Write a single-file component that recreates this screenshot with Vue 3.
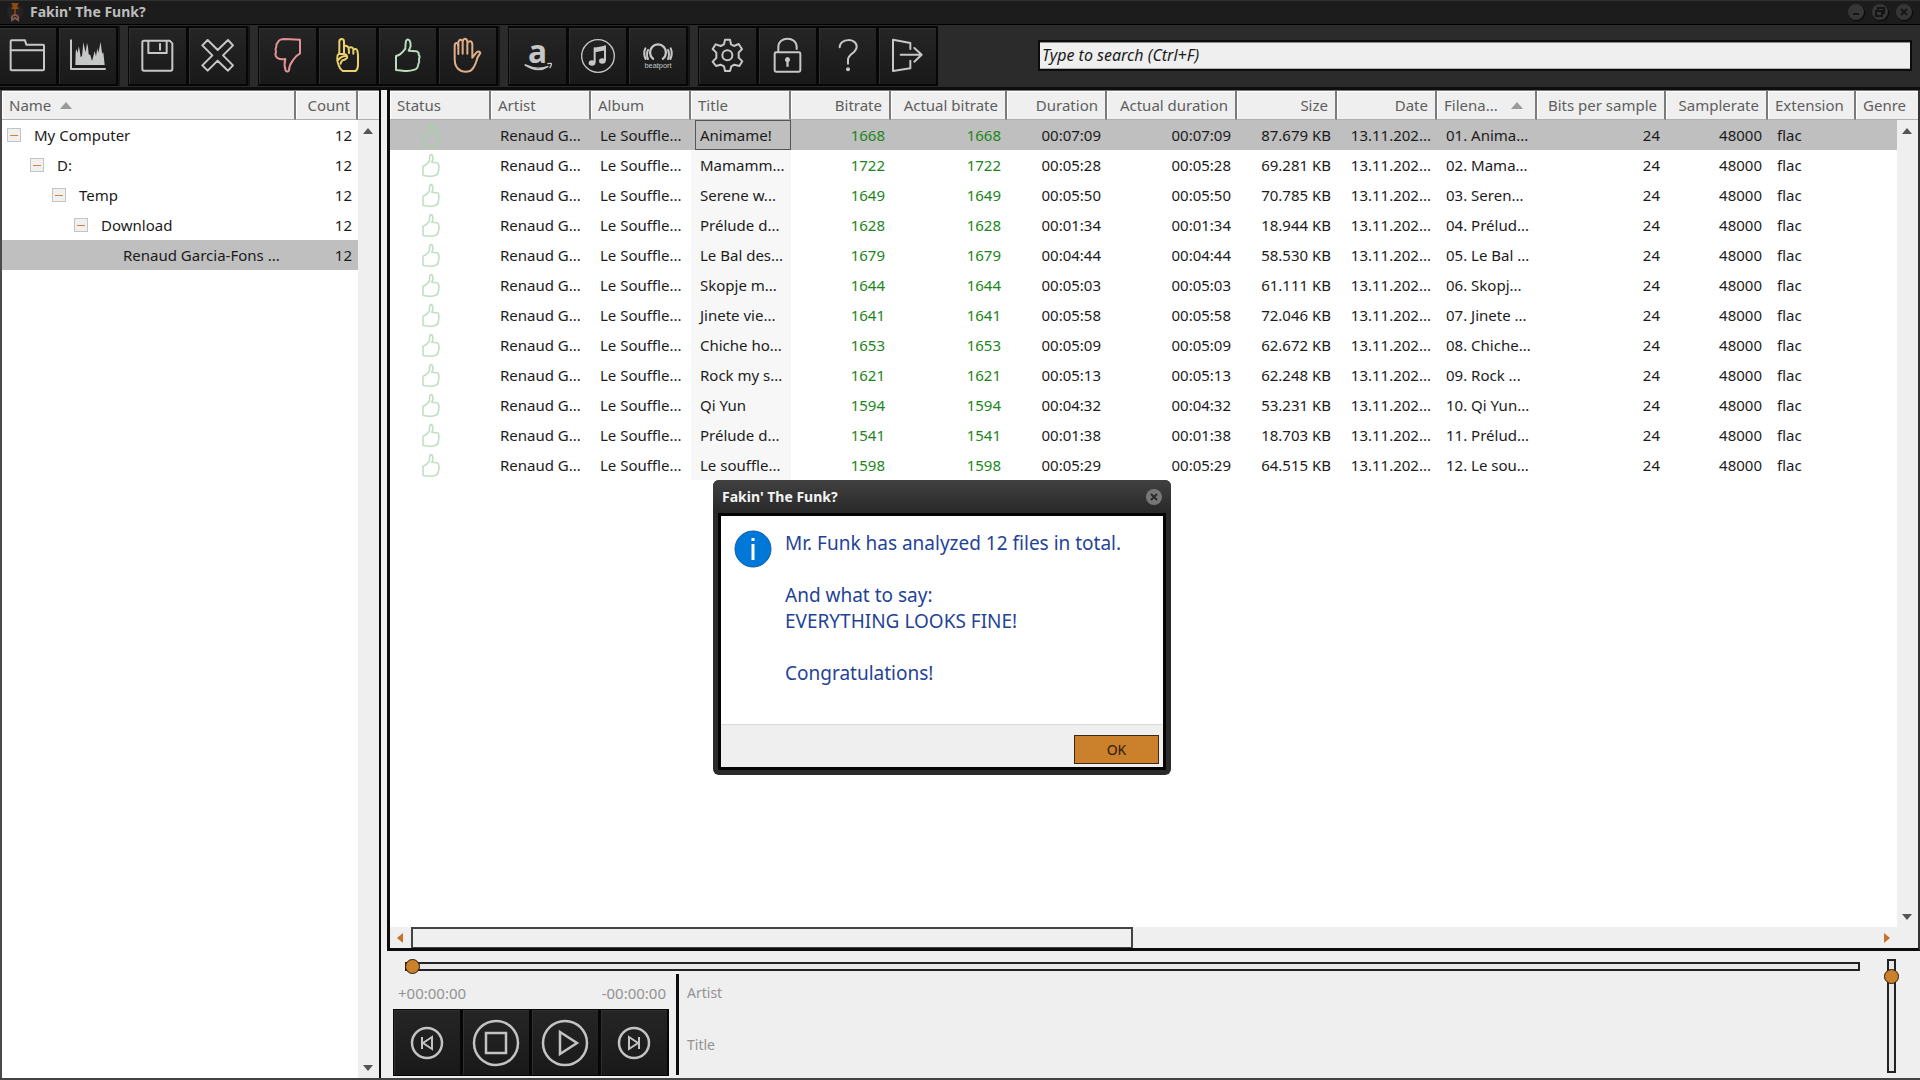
<script setup>
import { ref } from 'vue'

const thumbUp = 'M438 111Q452 109 466 89Q466 76 468 66Q473 57 479 65Q486 80 476 95L498 97Q508 99 506 107Q511 113 507 120Q509 129 505 135Q504 149 494 152Q480 157 465 156L438 153Z'

const groups = [
  [
    { label: 'Open folder', box: '-6 21 180 180', d: ['M32 152V67Q32 64 35 64H75L79 77H129Q132 77 132 80V151Q132 154 129 154H35Q32 154 32 151', 'M32 94H132'] },
    { label: 'Spectrum', box: '174 21 180 180', d: ['M213 64V150H315'], fill: 'M226 138L227 98L230 90L233 103L236 82L239 94L242 114L246 112L250 70L254 88L257 100L261 72L264 84L266 106L271 108L276 126L280 112L284 96L288 112L292 88L295 102L302 68L305 94L307 104L310 100L314 138Z' }
  ],
  [
    { label: 'Save', box: '384 21 180 180', d: ['M432 65H509L517 73V150Q517 155 512 155H432Q427 155 427 150V70Q427 65 432 65Z', 'M445 66V102H500V66', 'M480 75V92'] },
    { label: 'Remove', box: '564 21 180 180', d: ['M607 79L623 63L653 93L684 63L699 79L669 109L699 139L684 155L653 125L623 155L607 139L637 109Z'] }
  ],
  [
    { label: 'Bad', box: '24 21 180 180', color: '#e39096', d: ['M150 62L104 60Q88 60 84 69Q77 76 79 83Q74 91 78 99Q74 108 80 115Q85 123 106 120Q101 137 107 155Q112 161 117 154Q117 140 128 125Q140 108 150 104Z'] },
    { label: 'Suspicious', box: '204 21 180 180', color: '#ecd06a', d: ['M268 105V68Q268 60 275 60Q282 60 282 68V105', 'M282 83Q286 78 293 83Q297 86 297 102M297 87Q303 81 310 89V104M310 92Q318 87 322 95L324 108V138Q324 150 317 156H278Q270 151 266 139Q260 127 262 113Q263 104 270 105H283Q293 107 291 117L284 122Q274 122 272 134M266 122Q274 111 287 111'] },
    { label: 'Good', box: '384 21 180 180', color: '#b9dcbb', d: [thumbUp] },
    { label: 'Stop', box: '564 21 180 180', color: '#deb08a', d: ['M625 105V80Q624 71 619 72Q614 73 614 82V120Q614 148 634 156Q648 160 660 156Q670 151 678 130Q682 113 691 102Q687 94 679 101L667 116V76Q666 67 660 67Q654 67 652 73V104', 'M625 80V70Q627 62 632 62Q637 62 638 68V104M638 68Q640 59 645 59Q651 59 652 68'] }
  ],
  [
    { label: 'Amazon', box: '24 21 180 180', d: [], amazon: true },
    { label: 'iTunes', box: '204 21 180 180', d: [], note: true },
    { label: 'Beatport', box: '384 21 180 180', d: [], beat: true }
  ],
  [
    { label: 'Settings', box: '54 21 180 180', d: ['M135 62H150L153 76L162 81L176 75L186 90L176 101V116L187 127L178 141L163 137L154 142L150 156H135L132 142L122 137L108 141L98 128L109 117V101L98 90L107 76L122 81L132 76Z', 'M157 109A15 15 0 1 1 127 109A15 15 0 1 1 157 109Z'] },
    { label: 'Unlock', box: '234 21 180 180', d: ['M288 100H357Q361 100 361 104V154Q361 158 357 158H288Q284 158 284 154V104Q284 100 288 100Z', 'M295 99V84C295 51 350 51 350 84V90'], fill: 'M322 114A8 8 0 0 1 326 129V143H319V129A8 8 0 0 1 322 114Z' },
    { label: 'Help', box: '414 21 180 180', d: ['M479 85C479 57 530 56 530 83C530 101 504 106 504 122V134'], fill: 'M504 145A6 6 0 1 1 504 157A6 6 0 1 1 504 145Z' },
    { label: 'Exit', box: '594 21 180 180', d: ['M691 90V72L639 62V156L691 148V125', 'M662 107H724M703 87L725 107L703 128'] }
  ]
]

const tree = [
  { name: 'My Computer', level: 0 },
  { name: 'D:', level: 1 },
  { name: 'Temp', level: 2 },
  { name: 'Download', level: 3 },
  { name: 'Renaud Garcia-Fons ...', level: 4, selected: true }
]

const columns = [
  { label: 'Status', cls: 'w101' },
  { label: 'Artist', cls: 'w100' },
  { label: 'Album', cls: 'w100' },
  { label: 'Title', cls: 'w100' },
  { label: 'Bitrate', cls: 'w100', num: true },
  { label: 'Actual bitrate', cls: 'w116', num: true },
  { label: 'Duration', cls: 'w100', num: true },
  { label: 'Actual duration', cls: 'w130', num: true },
  { label: 'Size', cls: 'w100', num: true },
  { label: 'Date', cls: 'w100', num: true },
  { label: 'Filena...', cls: 'w100', sorted: true },
  { label: 'Bits per sample', cls: 'w129', num: true },
  { label: 'Samplerate', cls: 'w102', num: true },
  { label: 'Extension', cls: 'w88' },
  { label: 'Genre', cls: 'rest' }
]

const tracks = [
  ['Animame!', 1668, '00:07:09', '87.679', '01. Anima...'],
  ['Mamamm...', 1722, '00:05:28', '69.281', '02. Mama...'],
  ['Serene w...', 1649, '00:05:50', '70.785', '03. Seren...'],
  ['Prélude d...', 1628, '00:01:34', '18.944', '04. Prélud...'],
  ['Le Bal des...', 1679, '00:04:44', '58.530', '05. Le Bal ...'],
  ['Skopje m...', 1644, '00:05:03', '61.111', '06. Skopj...'],
  ['Jinete vie...', 1641, '00:05:58', '72.046', '07. Jinete ...'],
  ['Chiche ho...', 1653, '00:05:09', '62.672', '08. Chiche...'],
  ['Rock my s...', 1621, '00:05:13', '62.248', '09. Rock ...'],
  ['Qi Yun', 1594, '00:04:32', '53.231', '10. Qi Yun...'],
  ['Prélude d...', 1541, '00:01:38', '18.703', '11. Prélud...'],
  ['Le souffle...', 1598, '00:05:29', '64.515', '12. Le sou...']
].map(([title, bitrate, duration, size, file]) => ({ title, bitrate, duration, size, file }))

const search = ref('')
const position = ref(0)
const volume = ref(92)
const dialogOpen = ref(true)
</script>

<template>
  <div class="app">
    <header class="titlebar">
      <svg class="logo" viewBox="0 0 16 20" aria-hidden="true">
        <circle cx="8" cy="10" r="8" fill="#262423" />
        <path d="M4 1H12L10 4L12 7H4L6 4Z" fill="#8a4c10" />
        <path d="M8 7V13" stroke="#7a3c10" stroke-width="2" />
        <path d="M5 18Q4 13 8 13Q12 13 11 18L8 16Z" fill="none" stroke="#80584c" stroke-width="2" />
      </svg>
      <h1>Fakin' The Funk?</h1>
      <div class="window-buttons">
        <button type="button" aria-label="Minimize"><svg viewBox="0 0 16 16"><path d="M5 10H11" /></svg></button>
        <button type="button" aria-label="Restore"><svg viewBox="0 0 16 16"><path d="M6 6V4H12V9H10M4 7H10V12H4Z" /></svg></button>
        <button type="button" aria-label="Close"><svg viewBox="0 0 16 16"><path d="M5 5L11 11M11 5L5 11" /></svg></button>
      </div>
    </header>

    <div class="toolbar">
      <div v-for="(group, g) in groups" :key="g" class="group">
        <button v-for="tool in group" :key="tool.label" type="button" class="tool" :aria-label="tool.label">
          <svg :viewBox="tool.box" :style="{ color: tool.color }">
            <path v-for="d in tool.d" :key="d" :d="d" class="line" />
            <path v-if="tool.fill" :d="tool.fill" fill="currentColor" />
            <template v-if="tool.amazon">
              <text x="113" y="131" text-anchor="middle" class="amazon">a</text>
              <path d="M74 137Q112 164 145 142Q112 155 74 137Z" class="thin" fill="currentColor" />
              <path d="M142 134Q157 131 154 137Q153 142 149 147" class="thin" />
            </template>
            <template v-if="tool.note">
              <circle cx="294" cy="111" r="49" class="thin" />
              <path d="M284 93L315 87" stroke="currentColor" stroke-width="13" />
              <path d="M284 129V88M315 123V82" class="line" />
              <ellipse cx="276" cy="132" rx="10" ry="8" fill="currentColor" />
              <ellipse cx="307" cy="126" rx="10" ry="8" fill="currentColor" />
            </template>
            <template v-if="tool.beat">
              <path d="M459 119A24 24 0 1 1 489 119" class="line heavy" />
              <path d="M444 93Q438 106 444 120M504 93Q510 106 504 120M436 88Q429 103 437 120M512 88Q519 103 511 120" class="line" />
              <text x="474" y="146" text-anchor="middle" class="beat">beatport</text>
            </template>
          </svg>
        </button>
      </div>
      <input v-model="search" class="search" type="text" placeholder="Type to search (Ctrl+F)" aria-label="Search">
    </div>

    <main class="workspace">
      <aside class="folders">
        <table class="tree">
          <colgroup><col><col class="count-col"><col class="edge-col"></colgroup>
          <thead>
            <tr>
              <th>Name <span class="sort"></span></th>
              <th class="num">Count</th>
              <th aria-hidden="true"></th>
            </tr>
          </thead>
          <tbody>
            <tr v-for="node in tree" :key="node.name" :class="{ selected: node.selected }">
              <td>
                <div class="node" :style="{ paddingLeft: node.level * 22 + (node.level ? 6 : 5) + 'px' }">
                  <button v-if="!node.selected" type="button" class="toggle" aria-label="Collapse"></button>
                  <span v-else class="toggle-space"></span>
                  <span>{{ node.name }}</span>
                </div>
              </td>
              <td class="num">12</td>
              <td></td>
            </tr>
          </tbody>
        </table>
        <div class="vbar"><i class="up"></i><i class="down"></i></div>
      </aside>

      <section class="right">
        <div class="list">
          <div class="grid">
            <table class="tracks">
              <colgroup><col v-for="c in columns" :key="c.label" :class="c.cls"></colgroup>
              <thead>
                <tr>
                  <th v-for="c in columns" :key="c.label" :class="{ num: c.num }">{{ c.label }}<span v-if="c.sorted" class="sort"></span></th>
                </tr>
              </thead>
              <tbody>
                <tr v-for="(t, i) in tracks" :key="t.file" :class="{ selected: i === 0 }">
                  <td class="status"><svg viewBox="430 54 86 110" role="img" aria-label="Good"><path :d="thumbUp" /></svg></td>
                  <td>Renaud G...</td>
                  <td>Le Souffle...</td>
                  <td class="title"><span>{{ t.title }}</span></td>
                  <td class="num green">{{ t.bitrate }}</td>
                  <td class="num green">{{ t.bitrate }}</td>
                  <td class="num">{{ t.duration }}</td>
                  <td class="num">{{ t.duration }}</td>
                  <td class="num">{{ t.size }} KB</td>
                  <td class="num">13.11.202...</td>
                  <td>{{ t.file }}</td>
                  <td class="num">24</td>
                  <td class="num">48000</td>
                  <td>flac</td>
                  <td></td>
                </tr>
              </tbody>
            </table>
            <div class="vbar"><i class="up"></i><i class="down"></i></div>
          </div>
          <div class="hbar">
            <i class="left"></i>
            <div class="rail"><div class="thumb"></div></div>
            <i class="next"></i>
          </div>
        </div>

        <footer class="player">
          <div class="player-main">
            <input v-model="position" class="seek" type="range" min="0" max="100" aria-label="Position">
            <div class="deck">
              <div class="transport">
                <div class="times"><span>+00:00:00</span><span>-00:00:00</span></div>
                <div class="controls">
                  <button type="button" aria-label="Previous"><svg viewBox="0 0 68 68"><circle cx="34" cy="34" r="15" /><path class="fine" d="M29 28V40M39 28V40L30 34Z" /></svg></button>
                  <button type="button" aria-label="Stop"><svg viewBox="0 0 68 68"><circle cx="34" cy="34" r="22" /><path d="M24 24H44V44H24Z" /></svg></button>
                  <button type="button" aria-label="Play"><svg viewBox="0 0 68 68"><circle cx="34" cy="34" r="22" /><path d="M29 23V45L46 34Z" /></svg></button>
                  <button type="button" aria-label="Next"><svg viewBox="0 0 68 68"><circle cx="34" cy="34" r="15" /><path class="fine" d="M39 28V40M29 28V40L38 34Z" /></svg></button>
                </div>
              </div>
              <div class="meta"><span>Artist</span><span>Title</span></div>
            </div>
          </div>
          <input v-model="volume" class="volume" type="range" min="0" max="100" aria-label="Volume">
        </footer>
      </section>
    </main>

    <div v-if="dialogOpen" class="dialog" role="dialog" aria-labelledby="dialog-title">
      <div class="dialog-title">
        <h2 id="dialog-title">Fakin' The Funk?</h2>
        <button type="button" aria-label="Close" @click="dialogOpen = false"><svg viewBox="0 0 16 16"><path d="M5 5L11 11M11 5L5 11" /></svg></button>
      </div>
      <div class="dialog-frame">
        <div class="dialog-body">
          <svg class="info" viewBox="0 0 38 38" aria-hidden="true">
            <circle cx="19" cy="19" r="18" fill="#0078d7" stroke="#0d5fa5" />
            <path d="M19 14V30M19 8V11" stroke="#fff" stroke-width="3" />
          </svg>
          <div class="message">
            <p>Mr. Funk has analyzed 12 files in total.</p>
            <p>And what to say:<br>EVERYTHING LOOKS FINE!</p>
            <p>Congratulations!</p>
          </div>
        </div>
        <div class="dialog-actions"><button type="button" @click="dialogOpen = false">OK</button></div>
      </div>
    </div>
  </div>
</template>

<style>
body { margin: 0; background: #efefef; }
</style>

<style scoped>
* { box-sizing: border-box; }
.app {
  position: relative;
  display: flex;
  flex-direction: column;
  min-height: 100vh;
  overflow: hidden;
  background: #efefef;
  border-bottom: 2px solid #434346;
  color: #1b1b1b;
  font: 15px/20px "Noto Sans", "Open Sans", sans-serif;
}
button, input { font: inherit; margin: 0; }
button { padding: 0; border: 0; }
svg { display: block; }
h1, h2, p { margin: 0; }

.titlebar {
  display: flex;
  align-items: center;
  height: 25px;
  padding: 0 8px 2px 7px;
  background: #1c1c1c;
  border-top: 1px solid #303030;
  border-bottom: 1px solid #000;
}
.logo { width: 16px; height: 20px; }
h1, h2 { font-size: 14px; line-height: 20px; font-weight: 700; }
h1 { margin-left: 7px; color: #bdbdbd; }
.window-buttons { display: flex; gap: 8px; margin-left: auto; }
.window-buttons button { width: 16px; height: 16px; border-radius: 50%; background: #363636; box-shadow: 1px 1px 1px #0a0a0a; }
.window-buttons path, .dialog-title path { fill: none; stroke: #151515; stroke-width: 2; }

.toolbar {
  display: flex;
  align-items: center;
  gap: 8px;
  height: 65px;
  padding-right: 8px;
  background: #2b2b2b;
  border-bottom: 3px solid #0e0e0e;
}
.group { display: flex; height: 60px; border-right: 2px solid #161616; }
.group:first-child { margin-left: -2px; }
.group:nth-last-child(2) { border-right: 0; }
.tool {
  width: 60px;
  height: 60px;
  border: 2px solid #060606;
  border-left-width: 1px;
  background: linear-gradient(#252525, #191919);
  box-shadow: inset 1px 1px #303030;
  color: #c6c7c7;
}
.tool svg { width: 60px; height: 60px; margin: -2px -1px; }
.line { fill: none; stroke: currentColor; stroke-width: 6; stroke-linejoin: round; stroke-linecap: round; }
.heavy { stroke-width: 7; }
.thin { stroke: currentColor; stroke-width: 4; fill: none; }
.amazon { font: 700 95px "Open Sans", sans-serif; fill: currentColor; }
.beat { font: 22px "Liberation Sans", sans-serif; fill: currentColor; }
.search {
  flex: 1;
  min-width: 120px;
  height: 31px;
  margin: 0 0 2px 92px;
  padding: 0 2px;
  border: 2px solid #0c0c0c;
  border-radius: 0;
  background: #efefef;
  box-shadow: inset 0 1px #8c8c8c, inset 0 -1px #b0b0b0;
  outline: 0;
}
.search::placeholder { color: #1b1b1b; opacity: 1; font-style: italic; font-size: 16px; }

.workspace { display: flex; flex: 1; }
.folders {
  display: grid;
  grid-template-columns: minmax(0, 1fr);
  flex: 0 0 381px;
  background: #fff;
  border-left: 2px solid #4a4a4a;
  border-right: 2px solid #0c0c0c;
}
.tree, .grid > .tracks { grid-area: 1 / 1; align-self: start; }
table { width: 100%; table-layout: fixed; border-collapse: separate; border-spacing: 0; }
.count-col { width: 62px; }
.edge-col { width: 21px; }
th, td { padding: 0; overflow: hidden; white-space: nowrap; text-align: left; }
th {
  height: 30px;
  padding: 0 7px 0 7px;
  background: #efefef;
  border-top: 1px solid #777;
  border-bottom: 1px solid #b0b0b0;
  border-right: 2px solid #7b7b7b;
  box-shadow: inset 1px 1px #fff;
  color: #5e5e5e;
  font-weight: 400;
}
th:last-child { border-right: 0; }
td { height: 30px; padding: 0 6px 0 9px; }
.tree td:first-child { padding: 0; }
.tree th { padding-right: 6px; }
.num { text-align: right; }
.selected td { background: #bfbfbf; }
.sort {
  display: inline-block;
  margin-left: 5px;
  border: 6px solid transparent;
  border-top: 0;
  border-bottom: 7px solid #9a9a9a;
  vertical-align: 2px;
}
.tracks .sort { margin-left: 13px; }
.node { display: flex; align-items: center; gap: 13px; }
.toggle, .toggle-space { width: 14px; height: 14px; }
.toggle { border: 1px solid #c4c4c4; background: linear-gradient(#d08438, #d08438) center / 8px 1px no-repeat #f1f0ee; }

.vbar {
  grid-area: 1 / 1;
  justify-self: end;
  display: flex;
  flex-direction: column;
  align-items: center;
  justify-content: space-between;
  width: 21px;
  margin-top: 30px;
  padding: 8px 1px 7px 0;
  background: #efefef;
}
.vbar i, .hbar i { width: 0; height: 0; border: 5px solid transparent; }
.vbar .up { border-top: 0; border-bottom: 6px solid #555; }
.vbar .down { border-bottom: 0; border-top: 6px solid #555; }

.right { display: flex; flex: 1; flex-direction: column; min-width: 0; margin-left: 6px; }
.list {
  display: flex;
  flex: 1;
  flex-direction: column;
  background: #fff;
  border-left: 3px solid #0c0c0c;
  border-right: 2px solid #333;
  border-bottom: 3px solid #0c0c0c;
}
.grid { display: grid; grid-template-columns: minmax(0, 1fr); flex: 1; }
.w100 { width: 100px; }
.w101 { width: 101px; }
.w116 { width: 116px; }
.w130 { width: 130px; }
.w129 { width: 129px; }
.w102 { width: 102px; }
.w88 { width: 88px; }
.status svg { width: 20px; height: 25px; margin-left: 22px; }
.status path { fill: none; stroke: #bfe0c1; stroke-width: 7; stroke-linejoin: round; }
.selected .status path { stroke: #a5cfa8; }
.title { padding: 0 0 0 4px; background: #f7f7f7; }
.title span { display: block; height: 30px; padding: 4px; border: 1px solid transparent; }
.selected .title span { border-color: #555; }
.green { color: #1c851c; }
.hbar {
  display: flex;
  align-items: center;
  height: 21px;
  padding-right: 28px;
  background: #efefef;
}
.hbar .left { margin: 0 8px 0 7px; border-left: 0; border-right: 6px solid #c67226; }
.hbar .next { border-right: 0; border-left: 6px solid #c67226; }
.rail { flex: 1; height: 21px; }
.thumb { width: 49%; height: 21px; border: 2px solid #444; border-bottom-width: 1px; }

.player { display: flex; gap: 24px; height: 127px; padding: 8px 21px 3px 6px; color: #929292; }
.player-main { flex: 1; }
input[type="range"] { -webkit-appearance: none; appearance: none; display: block; background: none; }
input[type="range"]::-webkit-slider-thumb {
  -webkit-appearance: none;
  width: 15px;
  height: 15px;
  border: 1px solid #24180c;
  border-radius: 50%;
  background: #cb802b;
}
.seek { width: calc(100% - 12px); height: 15px; margin-left: 12px; }
.seek::-webkit-slider-runnable-track { height: 9px; border: 2px solid #222; background: #e8e8e8; }
.seek::-webkit-slider-thumb { margin: -5px 0 0 -2px; }
.volume { width: 15px; height: 114px; writing-mode: vertical-lr; direction: rtl; }
.volume::-webkit-slider-runnable-track { width: 9px; border: 2px solid #222; background: #e8e8e8; }
.volume::-webkit-slider-thumb { margin-left: -5px; }
.deck { display: flex; }
.transport { width: 276px; }
.times { display: flex; justify-content: space-between; padding: 9px 3px 6px 5px; }
.controls { display: flex; }
.controls button {
  width: 69px;
  height: 67px;
  border: 1px solid #060606;
  border-right-width: 2px;
  background: linear-gradient(#252525, #191919);
  box-shadow: inset 1px 1px #303030;
}
.controls svg { width: 68px; height: 68px; margin: -1px; fill: none; stroke: #c2c3c3; stroke-width: 2.5; }
.controls .fine { stroke-width: 2; }
.meta {
  display: flex;
  flex-direction: column;
  gap: 32px;
  height: 101px;
  margin-left: 7px;
  padding: 9px 8px;
  border-left: 3px solid #0c0c0c;
  font-size: 14px;
}

.dialog {
  position: absolute;
  top: 480px;
  left: 713px;
  width: 458px;
  padding: 0 5px 5px;
  border-radius: 6px;
  background: #2a2a2a;
}
.dialog-title { display: flex; align-items: center; justify-content: space-between; height: 33px; margin: 0 -5px; padding: 0 9px; border-radius: 6px 6px 0 0; background: linear-gradient(#414141, #282828); }
.dialog-title button { width: 16px; height: 16px; border-radius: 50%; background: #777; }
.dialog-title path { stroke: #2a2a2a; }
h2 { color: #f4f4f4; }
.dialog-frame { border: 3px solid #040404; background: #fff; }
.dialog-body { display: flex; gap: 13px; min-height: 208px; padding: 14px 13px 0; }
.info { flex: none; width: 38px; height: 38px; }
.message { display: flex; flex-direction: column; gap: 26px; color: #1f4397; font-size: 19px; line-height: 26px; }
.dialog-actions { display: flex; justify-content: flex-end; height: 43px; padding: 10px 4px 4px; border-top: 1px solid #dadada; background: #efefef; }
.dialog-actions button { width: 85px; height: 29px; border: 1px solid #3a2a1a; background: #cb802b; color: #2a1a08; font-size: 14px; }
</style>
